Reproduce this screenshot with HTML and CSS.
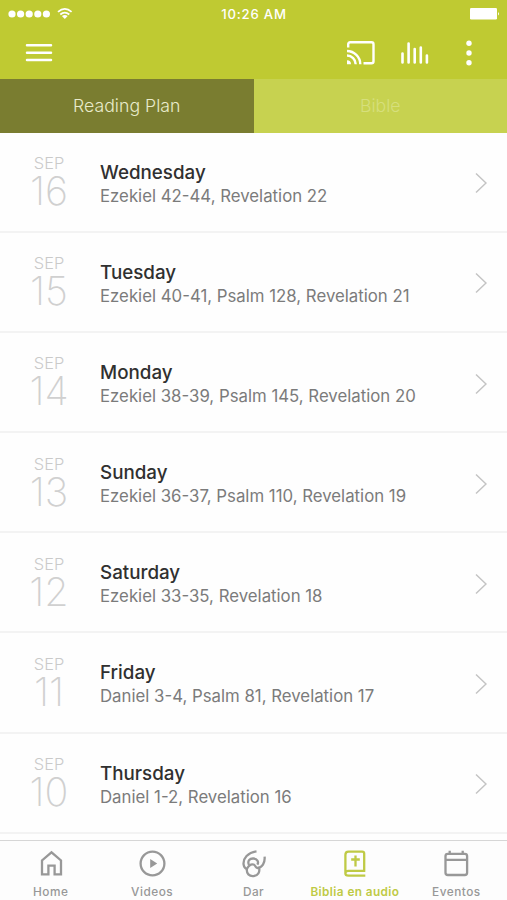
FILE: index.html
```html
<!DOCTYPE html>
<html lang="es">
<head>
<meta charset="utf-8">
<title>Reading Plan</title>
<link rel="stylesheet" href="styles.css">
</head>
<body>
<div class="app">
  <header class="header">
    <div class="status">
      <div class="signal">
        <svg width="66" height="16" viewBox="0 0 66 16" fill="#fff"><circle cx="4" cy="8" r="3.6"/><circle cx="12.6" cy="8" r="3.6"/><circle cx="21.2" cy="8" r="3.6"/><circle cx="29.8" cy="8" r="3.6"/><circle cx="38.4" cy="8" r="3.6"/><g fill="none" stroke="#fff" stroke-width="1.8"><path d="M50 5.9q6.800-6 13.600 0M52.300 8.500q4.500-3.800 9 0"/></g><path d="M53.900 10q2.900-2.200 5.800 0l-2.900 3z"/></svg>
      </div>
      <div class="clock">10:26 AM</div>
      <div class="battery"><svg width="30" height="12" viewBox="0 0 30 12" fill="#fff"><rect width="27" height="11.500" rx="1.300"/><path d="M28 4q2 1.800 0 3.600z"/></svg></div>
    </div>
    <div class="toolbar">
      <svg class="menu" width="28" height="20" viewBox="0 0 28 20"><path d="M2 2.200h24M2 9.700h24M2 17.100h24" stroke="#fff" stroke-width="2.500" stroke-linecap="round"/></svg>
      <svg class="cast" width="28" height="24" viewBox="0 0 28 24" fill="none" stroke="#fff" stroke-width="2.400"><path d="M1.200 6.500V3.200Q1.200 1.300 3.200 1.300H24.500Q26.500 1.300 26.500 3.300V20.200Q26.500 22.200 24.500 22.200H16.500"/><path d="M0 10A13.400 13.400 0 0 1 13.300 23.200M0 14.500A8.800 8.800 0 0 1 8.700 23.200"/><path d="M0 19.200a4 4 0 0 1 4 4H0z" fill="#fff" stroke="none"/></svg>
      <svg class="levels" width="28" height="22" viewBox="0 0 28 22"><path d="M1.500 11.500v9M7.600 1.500v19M13.700 7v13.500M19.800 5.500v15M25.900 13.500v7" stroke="#fff" stroke-width="2.600" stroke-linecap="round"/></svg>
      <svg class="more" width="6" height="26" viewBox="0 0 6 26" fill="#fff"><circle cx="3" cy="3.200" r="2.700"/><circle cx="3" cy="13" r="2.700"/><circle cx="3" cy="22.800" r="2.700"/></svg>
    </div>
  </header>
  <nav class="segments">
    <div class="segment selected"><span>Reading Plan</span></div>
    <div class="segment"><span>Bible</span></div>
  </nav>
  <main class="list">
    <div class="row"><div class="date"><span class="month">SEP</span><span class="number">16</span></div><div class="info"><div class="day">Wednesday</div><div class="passage">Ezekiel 42-44, Revelation 22</div></div><svg class="chevron" viewBox="0 0 12 22"><path d="M1 1.500l10 9.500-10 9.500"/></svg></div>
    <div class="row"><div class="date"><span class="month">SEP</span><span class="number">15</span></div><div class="info"><div class="day">Tuesday</div><div class="passage">Ezekiel 40-41, Psalm 128, Revelation 21</div></div><svg class="chevron" viewBox="0 0 12 22"><path d="M1 1.500l10 9.500-10 9.500"/></svg></div>
    <div class="row"><div class="date"><span class="month">SEP</span><span class="number">14</span></div><div class="info"><div class="day">Monday</div><div class="passage">Ezekiel 38-39, Psalm 145, Revelation 20</div></div><svg class="chevron" viewBox="0 0 12 22"><path d="M1 1.500l10 9.500-10 9.500"/></svg></div>
    <div class="row"><div class="date"><span class="month">SEP</span><span class="number">13</span></div><div class="info"><div class="day">Sunday</div><div class="passage">Ezekiel 36-37, Psalm 110, Revelation 19</div></div><svg class="chevron" viewBox="0 0 12 22"><path d="M1 1.500l10 9.500-10 9.500"/></svg></div>
    <div class="row"><div class="date"><span class="month">SEP</span><span class="number">12</span></div><div class="info"><div class="day">Saturday</div><div class="passage">Ezekiel 33-35, Revelation 18</div></div><svg class="chevron" viewBox="0 0 12 22"><path d="M1 1.500l10 9.500-10 9.500"/></svg></div>
    <div class="row"><div class="date"><span class="month">SEP</span><span class="number">11</span></div><div class="info"><div class="day">Friday</div><div class="passage">Daniel 3-4, Psalm 81, Revelation 17</div></div><svg class="chevron" viewBox="0 0 12 22"><path d="M1 1.500l10 9.500-10 9.500"/></svg></div>
    <div class="row"><div class="date"><span class="month">SEP</span><span class="number">10</span></div><div class="info"><div class="day">Thursday</div><div class="passage">Daniel 1-2, Revelation 16</div></div><svg class="chevron" viewBox="0 0 12 22"><path d="M1 1.500l10 9.500-10 9.500"/></svg></div>
  </main>
  <nav class="tabs">
    <div class="tab"><svg viewBox="0 0 30 30"><path d="M6 25.400V11.500L15.500 3.300 25 11.500v13.900H18.600V16.700h-6.200v8.700z"/></svg><span>Home</span></div>
    <div class="tab"><svg viewBox="0 0 30 30"><circle cx="15.500" cy="14.500" r="11.900"/><path d="M13.200 10v9l7-4.500z" fill="currentColor" stroke="none"/></svg><span>Videos</span></div>
    <div class="tab"><svg viewBox="0 0 30 30"><path d="M17.500 2.300C9 3.300 3.800 9.500 4.600 15.500C5 18.300 6.700 20.200 8 19.600C9.500 17 12 14.800 14.500 15.500C17 16.300 16.200 18.900 18.500 19C23 18.700 26.200 14 25.600 7.600"/><path d="M10 16C8 11.600 11 9.300 14.500 9.500C18 9.700 20.200 12.600 18.300 15.700"/><path d="M8 19.600C7 24.500 10.500 27.500 14.500 27.100C19 26.600 21.200 23 20 18.800"/></svg><span>Dar</span></div>
    <div class="tab active"><svg viewBox="0 0 30 30"><path d="M25.300 21.800H8.500C4.300 21.800 4.300 26.700 8.500 26.700H25.300M5.400 24.500V5.700Q5.400 2.600 8.500 2.600H22.200Q24.200 2.600 24.200 4.700V21.800M15.500 6.500v11M11.200 10.500h8.600"/></svg><span>Biblia en audio</span></div>
    <div class="tab"><svg viewBox="0 0 30 30"><rect x="4.500" y="4.800" width="21.600" height="21.200" rx="2.300"/><path d="M4.500 10.800h21.600M8.700 1.800v3M21.700 1.800v3"/></svg><span>Eventos</span></div>
  </nav>
</div>
</body>
</html>
```
FILE: styles.css
```css
* { box-sizing: border-box; }
body { margin: 0; background: #fff; font-family: Inter, "Liberation Sans", sans-serif; }
svg { display: block; flex: none; }
.app { width: 507px; height: 900px; display: flex; flex-direction: column; overflow: hidden; }
.header { height: 79px; flex: none; background: #bfca32; color: #fff; }
.status { height: 27px; display: grid; grid-template-columns: 1fr auto 1fr; align-items: center; padding: 0 7px 0 8px; }
.clock { font-size: 13.200px; font-weight: 500; letter-spacing: .8px; }
.battery { justify-self: end; }
.toolbar { height: 52px; display: flex; align-items: center; padding: 0 35px 0 25px; }
.cast { margin-left: auto; }
.levels { margin-left: 26px; }
.more { margin-left: 37px; }
.segments { height: 53.500px; flex: none; display: flex; }
.segment { flex: 1; display: flex; align-items: center; justify-content: center; background: #c7d250; color: #d6df7c; font-size: 17.700px; font-weight: 300; }
.segment.selected { background: #7a7d30; color: #e9ebcb; }
.list { flex: none; height: 707.500px; overflow: hidden; background: #fefefe; }
.row { height: 100.200px; display: flex; align-items: flex-start; border-bottom: 2px solid #f3f3f3; }
.date { width: 100px; padding: 19.500px 2px 0 0; display: flex; flex-direction: column; align-items: center; color: #cacaca; }
.month { font-size: 16.400px; line-height: 22px; font-weight: 300; }
.number { font-size: 39.500px; line-height: 34px; font-weight: 200; color: #d0d0d0; }
.info { flex: 1; padding-top: 28px; }
.day { color: #303030; font-size: 18.800px; line-height: 24px; font-weight: 500; }
.passage { color: #7b7b7b; font-size: 16.800px; line-height: 22px; }
.chevron { width: 12px; height: 22px; margin: 39.700px 20px 0 0; fill: none; stroke: #c4c4c4; stroke-width: 1.500; }
.tabs { height: 60px; flex: none; display: flex; border-top: 1px solid #d6d6d6; background: #fdfdfd; color: #989898; }
.tab { flex: 1; display: flex; flex-direction: column; align-items: center; padding-top: 8px; }
.tab svg { width: 30px; height: 30px; fill: none; stroke: currentColor; stroke-width: 2.300; }
.tab span { margin-top: 6px; font-size: 11.800px; line-height: 15px; font-weight: 500; letter-spacing: .5px; white-space: nowrap; }
.tab.active { color: #bfca45; }
.tab.active span { font-weight: 600; letter-spacing: .4px; }
```
